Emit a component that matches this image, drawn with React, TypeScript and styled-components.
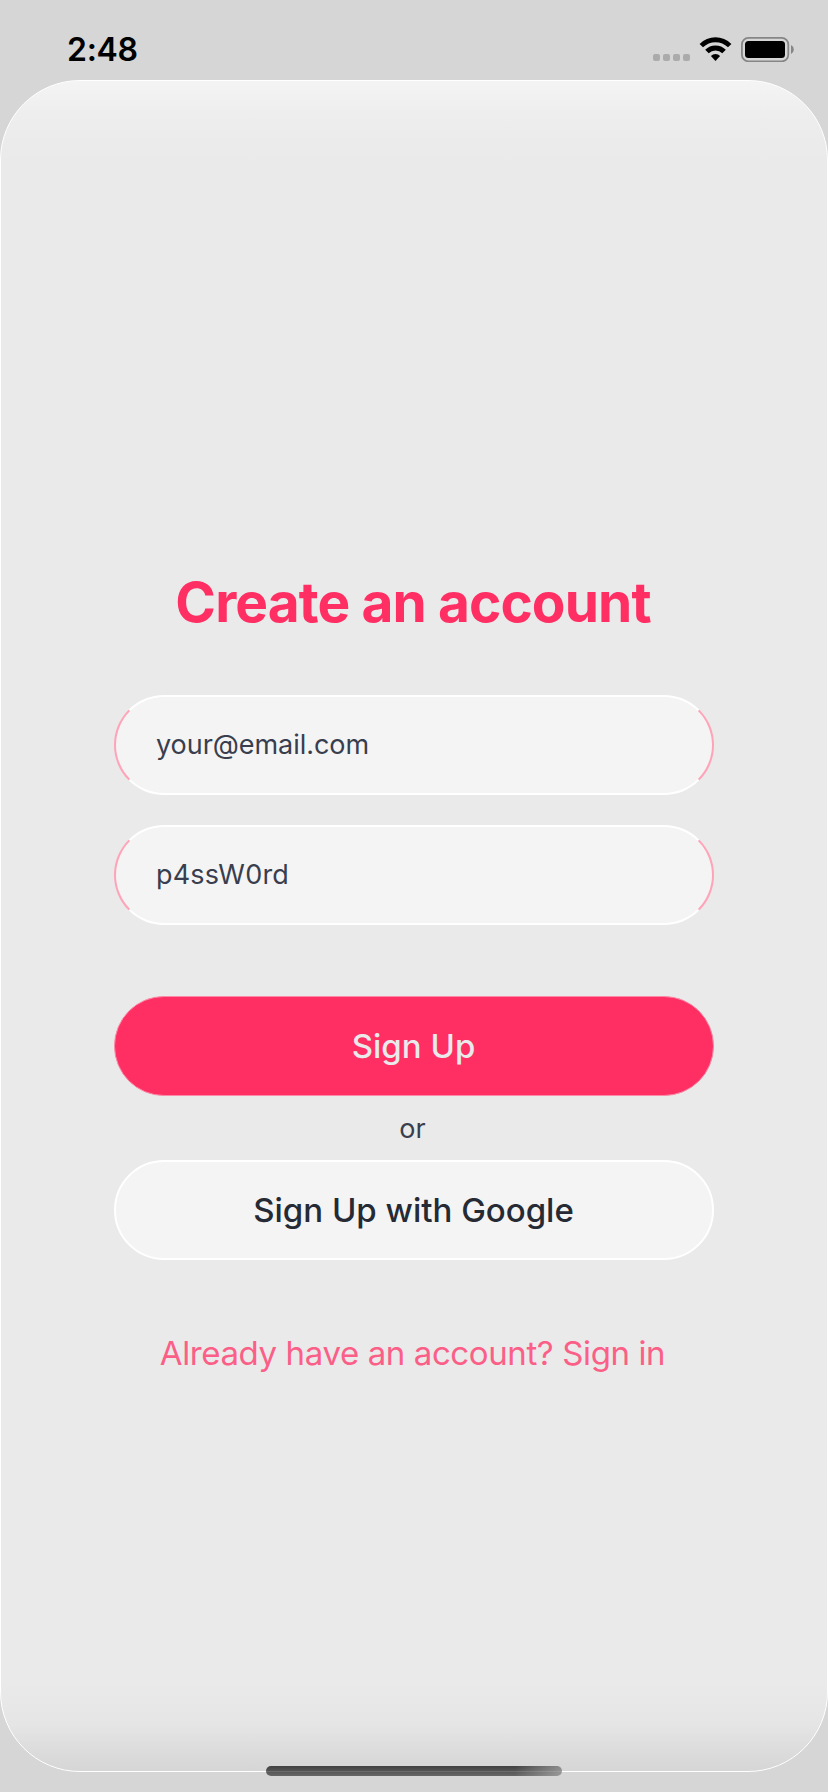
import React from "react";
import styled, { createGlobalStyle } from "styled-components";

const Global = createGlobalStyle`
  *, *::before, *::after { box-sizing: border-box; }
  body { margin: 0; background: #d6d6d6; }
`;

const Screen = styled.div`
  position: relative;
  display: flex;
  flex-direction: column;
  width: 828px;
  height: 1792px;
  padding-bottom: 20px;
  overflow: hidden;
  background: #d6d6d6;
  font-family: Inter, "Liberation Sans", sans-serif;
`;

const StatusBar = styled.header`
  display: flex;
  justify-content: space-between;
  height: 80px;
  padding: 29px 34px 11px 67px;
`;

const Clock = styled.time`
  padding-top: 1px;
  font-size: 32px;
  font-weight: 600;
  line-height: 40px;
  letter-spacing: -0.3px;
  color: #000;
`;

const StatusIcons = styled.svg`
  display: block;
  width: 142px;
  height: 26px;
  margin-top: 7px;
`;

const Panel = styled.main`
  flex: 1;
  display: flex;
  flex-direction: column;
  align-items: center;
  padding-top: 481px;
  border: 1px solid #fff;
  border-radius: 80px;
  background: linear-gradient(
    to bottom,
    #f4f4f4 0,
    #eeeeee 32px,
    #ebebeb 62px,
    #eaeaea 84px,
    #eaeaea calc(100% - 88px),
    #e5e5e5 calc(100% - 46px),
    #dddddd calc(100% - 24px),
    #d6d6d6 100%
  );
`;

const Title = styled.h1`
  margin: 0 0 53px;
  padding-right: 2px;
  font-size: 55px;
  font-weight: 700;
  line-height: 80px;
  letter-spacing: -0.9px;
  color: #ff2e63;
`;

const Form = styled.form`
  display: flex;
  flex-direction: column;
  width: 600px;
`;

const Field = styled.input<{ $spacing: string }>`
  height: 100px;
  padding: 0 41px 1px 40px;
  border: 2px solid;
  border-color: #fff #ffa3b9;
  border-radius: 50px;
  outline: none;
  background: #f4f4f4;
  color: #393e4e;
  font: 400 27px Inter, "Liberation Sans", sans-serif;
  letter-spacing: ${(p) => p.$spacing};

  & + & { margin-top: 30px; }
`;

const Button = styled.button<{ $primary?: boolean }>`
  height: 100px;
  padding: 0 1px 0 0;
  border: ${(p) => (p.$primary ? "1px solid #fb8ba7" : "2px solid #fff")};
  border-radius: 50px;
  background: ${(p) => (p.$primary ? "#ff2e63" : "#f4f4f4")};
  color: ${(p) => (p.$primary ? "#eaeaea" : "#252a34")};
  font: 500 33px Inter, "Liberation Sans", sans-serif;
`;

const Actions = styled.div`
  display: flex;
  flex-direction: column;
  margin-top: 71px;
`;

const Divider = styled.span`
  height: 64px;
  padding: 1px 3px 0 0;
  text-align: center;
  font-size: 27px;
  line-height: 64px;
  color: #393e4e;
`;

const SignInLink = styled.a`
  margin-top: 73px;
  padding-right: 3px;
  font-size: 33px;
  line-height: 40px;
  letter-spacing: -0.39px;
  color: #fb5f87;
`;

const HomeIndicator = styled.div`
  position: absolute;
  left: 266px;
  bottom: 16px;
  width: 296px;
  height: 10px;
  border-radius: 5px;
  background:
    linear-gradient(to bottom, transparent 5px, rgba(255, 255, 255, 0.12) 5px, rgba(255, 255, 255, 0.12) 6px, transparent 6px),
    linear-gradient(to right, transparent 84%, rgba(190, 190, 190, 0.6) 100%),
    linear-gradient(to bottom, #424242, #666666);
`;

function DeviceStatus() {
  return (
    <StatusIcons viewBox="652 36 142 26" aria-hidden="true">
      {[653, 663, 673, 683].map((x) => (
        <rect key={x} x={x} y="54" width="7" height="7" rx="2" fill="#ababab" />
      ))}
      <path d="M699.6 43.9 A22.5 22.5 0 0 1 731.4 43.9 L728 47.3 A17.7 17.7 0 0 0 703 47.3 Z" />
      <path d="M705.2 49.8 A14.4 14.4 0 0 1 725.8 49.8 L722.3 53.3 A9.7 9.7 0 0 0 708.7 53.3 Z" />
      <path d="M710.9 55.9 A6.6 6.6 0 0 1 720.1 55.9 L715.5 60.9 Z" />
      <rect x="741.9" y="37.9" width="46.4" height="23.4" rx="6.5" fill="none" stroke="#868686" strokeWidth="1.8" />
      <rect x="745" y="41" width="40" height="17" rx="3.5" />
      <path d="M791 45 A5 5 0 0 1 791 54 Z" fill="#868686" />
    </StatusIcons>
  );
}

export default function App() {
  return (
    <>
      <Global />
      <Screen>
        <StatusBar>
          <Clock>2:48</Clock>
          <DeviceStatus />
        </StatusBar>
        <Panel>
          <Title>Create an account</Title>
          <Form>
            <Field $spacing="-0.05px" defaultValue="your@email.com" aria-label="Email" />
            <Field $spacing="0.2px" defaultValue="p4ssW0rd" aria-label="Password" />
            <Actions>
              <Button type="button" $primary>Sign Up</Button>
              <Divider>or</Divider>
              <Button type="button">Sign Up with Google</Button>
            </Actions>
          </Form>
          <SignInLink>Already have an account? Sign in</SignInLink>
        </Panel>
        <HomeIndicator />
      </Screen>
    </>
  );
}
